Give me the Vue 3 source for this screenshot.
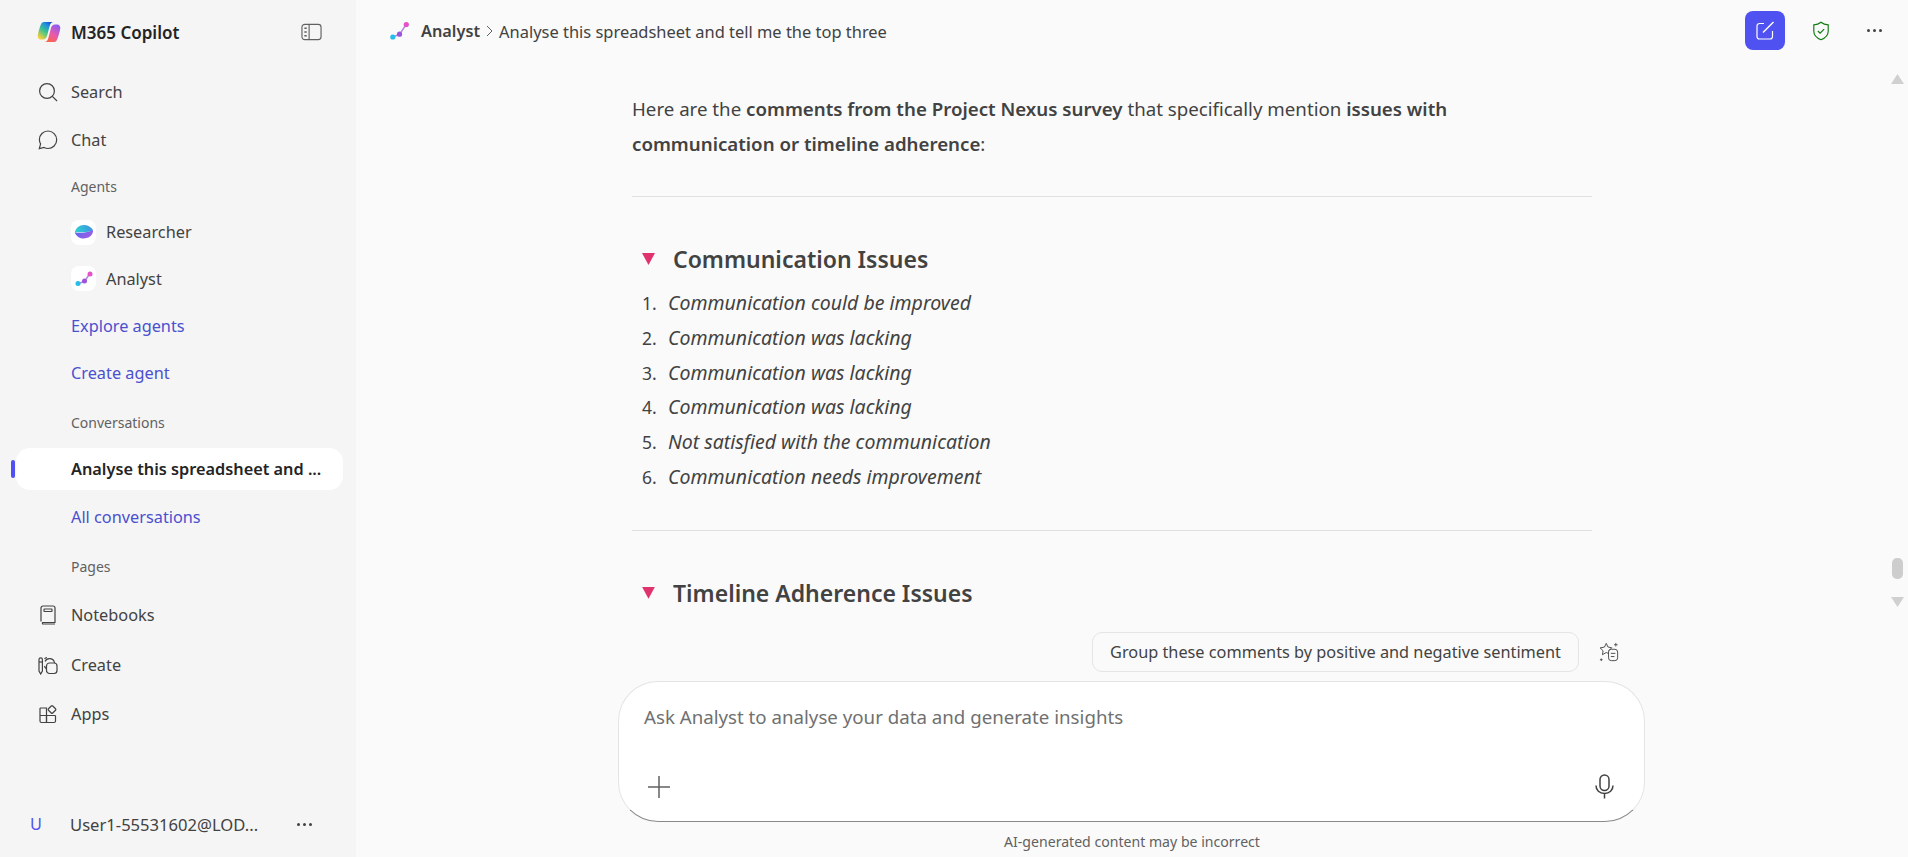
<script setup>
const communication = [
  'Communication could be improved',
  'Communication was lacking',
  'Communication was lacking',
  'Communication was lacking',
  'Not satisfied with the communication',
  'Communication needs improvement',
];
</script>

<template>
  <div class="app">
    <aside class="sidebar">
      <div class="brand">
        <svg class="brand-logo" viewBox="0 0 24 24">
          <defs>
            <linearGradient id="cpA" x1="0.1" y1="0.9" x2="0.7" y2="0">
              <stop offset="0" stop-color="#f8cf3c" />
              <stop offset="0.45" stop-color="#3fc48a" />
              <stop offset="0.8" stop-color="#1f8fe0" />
              <stop offset="1" stop-color="#1458d0" />
            </linearGradient>
            <linearGradient id="cpB" x1="0.2" y1="1" x2="0.8" y2="0">
              <stop offset="0" stop-color="#f9683a" />
              <stop offset="0.45" stop-color="#ec5aa8" />
              <stop offset="1" stop-color="#8a5cf4" />
            </linearGradient>
          </defs>
          <path fill="url(#cpA)" d="M7 2h9.500c-2 0-3 1.200-3.700 3.500L10 16c-.6 2-2 3.500-4 3.500H4C1.800 19.500.3 17.400.8 15 1.500 11 3 6.500 4 4.300 4.700 2.800 5.700 2 7 2z" />
          <path fill="url(#cpB)" d="M17 22H7.500c2 0 3-1.200 3.700-3.500L14 8c.6-2 2-3.500 4-3.500h2c2.200 0 3.700 2.100 3.200 4.500-.7 4-2.200 8.500-3.200 10.700C19.300 21.200 18.300 22 17 22z" />
        </svg>
        <span class="brand-name">M365 Copilot</span>
        <svg class="panel-icon" viewBox="0 0 22 18" fill="none" stroke="#616161" stroke-width="1.200">
          <rect x="1" y="1" width="20" height="16" rx="3" />
          <path d="M8.500 1v16" />
          <path d="M3.500 5h2.500M3.500 9h2.500M3.500 13h2.500" stroke-width="1.500" />
        </svg>
      </div>

      <div class="row row-main">
        <svg class="nav-icon" viewBox="0 0 20 20" fill="none" stroke="#424242" stroke-width="1.200">
          <circle cx="9" cy="9" r="7.400" />
          <path d="M14.400 14.400l4.600 4.600" />
        </svg>
        <span>Search</span>
      </div>
      <div class="row row-main">
        <svg class="nav-icon" viewBox="0 0 20 20" fill="none" stroke="#424242" stroke-width="1.200">
          <path d="M10 1C5.300 1 1.400 4.900 1.400 9.600c0 1.600.4 3 1.200 4.300L1.300 18.700l4.800-1.200c1.200.6 2.500 1 3.900 1 4.700 0 8.700-3.700 8.700-8.700C18.700 4.900 14.700 1 10 1z" />
        </svg>
        <span>Chat</span>
      </div>

      <div class="label label-agents">Agents</div>
      <div class="row row-sub agent-first">
        <span class="agent-tile">
          <svg viewBox="0 0 20 20">
            <defs>
              <linearGradient id="resA" x1="0" y1="0.4" x2="1" y2="0.2">
                <stop offset="0" stop-color="#2fd0d0" />
                <stop offset="1" stop-color="#3c8ee6" />
              </linearGradient>
              <linearGradient id="resB" x1="0" y1="0.2" x2="1" y2="0.8">
                <stop offset="0" stop-color="#5a68ea" />
                <stop offset="1" stop-color="#a85ce8" />
              </linearGradient>
            </defs>
            <path fill="url(#resA)" d="M.8 10.500C1.500 6 5.500 3 10 3c3.500 0 6.500 1.500 9 5-1.500 1-3 1.500-5 1.800-5 .8-9.800.5-13.200.7z" />
            <path fill="url(#resB)" d="M.8 10.500c3 .5 8 .5 12.500-.5 2.500-.5 4.500-1.200 5.700-2 .5 3-2 8-9 8.500C5.500 16.800 2 14 .8 10.500z" />
          </svg>
        </span>
        <span class="agent-name">Researcher</span>
      </div>
      <div class="row row-sub">
        <span class="agent-tile">
          <svg viewBox="0 0 20 20" fill="none">
            <path d="M4 14.500l6.500-2 5-7.500" stroke="#b58adf" stroke-width="1.500" />
            <circle cx="4" cy="14.500" r="2.500" fill="#27bdea" />
            <circle cx="10.500" cy="12" r="2.500" fill="#9b55dc" />
            <circle cx="16" cy="5" r="2.500" fill="#e651c8" />
          </svg>
        </span>
        <span class="agent-name">Analyst</span>
      </div>
      <div class="row row-sub link">Explore agents</div>
      <div class="row row-sub link">Create agent</div>

      <div class="label label-conv">Conversations</div>
      <div class="active-row">
        <span class="active-mark"></span>
        <span class="active-text">Analyse this spreadsheet and ...</span>
      </div>
      <div class="row row-sub link all-conv">All conversations</div>

      <div class="label label-pages">Pages</div>
      <div class="row row-main page-row first-page">
        <svg class="nav-icon" viewBox="0 0 20 20" fill="none" stroke="#424242" stroke-width="1.200">
          <path d="M3 16.500V3a2 2 0 0 1 2-2h10a2 2 0 0 1 2 2v14.500H4.600A1.600 1.600 0 0 0 4.600 19H17" />
          <rect x="6" y="4" width="8" height="2.500" rx=".5" />
        </svg>
        <span>Notebooks</span>
      </div>
      <div class="row row-main page-row">
        <svg class="nav-icon" viewBox="0 0 20 20" fill="none" stroke="#424242" stroke-width="1.200">
          <path d="M1 4.500a1.700 1.700 0 0 1 3.400 0V16l-1.700 3L1 16z" />
          <path d="M1 7h3.400" />
          <path d="M7 6.500A5 5 0 0 1 16.500 8" />
          <path d="M6.500 3.800A5 5 0 0 1 9 2.500" />
          <path d="M8 13.500a5 5 0 0 1-1.500-2.500" />
          <rect x="8.500" y="8" width="10.500" height="10.500" rx="3" />
        </svg>
        <span>Create</span>
      </div>
      <div class="row row-main page-row">
        <svg class="nav-icon" viewBox="0 0 20 20" fill="none" stroke="#424242" stroke-width="1.200">
          <path d="M2.500 4H8.500V18.500H3.500a1.500 1.500 0 0 1-1.500-1.500V4.500z" />
          <path d="M2 11.500h15.500M8.500 11.500v7h7.500a1.500 1.500 0 0 0 1.500-1.500v-5.500" />
          <rect x="11" y="2.500" width="6" height="6" rx="1" transform="rotate(45 14 5.500)" />
        </svg>
        <span>Apps</span>
      </div>

      <div class="user-row">
        <span class="user-initial">U</span>
        <span class="user-name">User1-55531602@LOD...</span>
        <span class="dots"><i></i><i></i><i></i></span>
      </div>
    </aside>

    <main class="main">
      <header class="topbar">
        <svg class="crumb-logo" viewBox="0 0 20 20" fill="none">
          <path d="M2.500 16l7-2.500 6-9" stroke="#b58adf" stroke-width="1.500" />
          <circle cx="2.800" cy="16" r="2.600" fill="#27bdea" />
          <circle cx="9.500" cy="13.200" r="2.600" fill="#9b55dc" />
          <circle cx="16.300" cy="3.500" r="2.600" fill="#e651c8" />
        </svg>
        <strong class="crumb-agent">Analyst</strong>
        <svg class="crumb-chevron" viewBox="0 0 7 12" fill="none" stroke="#616161" stroke-width="1">
          <path d="M1 1l5 5-5 5" />
        </svg>
        <span class="crumb-title">Analyse this spreadsheet and tell me the top three</span>
        <div class="top-actions">
          <button class="new-chat" type="button">
            <svg viewBox="0 0 20 20" fill="none" stroke="#fff" stroke-width="1.200">
              <path d="M9 2.500H4.500a2.500 2.500 0 0 0-2.500 2.500V15.500a2.500 2.500 0 0 0 2.500 2.500H15a2.500 2.500 0 0 0 2.500-2.500V10" />
              <path d="M8 11.500L18.500 1" stroke-width="1.500" />
            </svg>
          </button>
          <svg class="shield" viewBox="0 0 20 22" fill="none" stroke="#107c10" stroke-width="1.300">
            <path d="M10 1.200c2 1.700 4.700 2.800 8 3v7c0 4.500-3.200 7.500-8 9.500-4.800-2-8-5-8-9.500v-7c3.300-.2 6-1.300 8-3z" />
            <path d="M6.500 11l2.500 2.500 4.500-4.500" />
          </svg>
          <span class="dots top-dots"><i></i><i></i><i></i></span>
        </div>
      </header>

      <div class="scroll-area">
        <article class="answer">
          <p class="intro">
            Here are the <strong>comments from the Project Nexus survey</strong> that specifically mention
            <strong>issues with communication or timeline adherence</strong>:
          </p>
          <hr />
          <h3><span class="tri"></span>Communication Issues</h3>
          <ol>
            <li v-for="(item, i) in communication" :key="i">
              <span class="num">{{ i + 1 }}.</span><em>{{ item }}</em>
            </li>
          </ol>
          <hr class="second" />
          <h3><span class="tri"></span>Timeline Adherence Issues</h3>
        </article>

        <div class="scrollbar">
          <span class="arrow up"></span>
          <span class="thumb"></span>
          <span class="arrow down"></span>
        </div>
      </div>

      <div class="suggestions">
        <button class="chip" type="button">Group these comments by positive and negative sentiment</button>
        <svg class="spark" viewBox="0 0 22 22" fill="none" stroke="#424242" stroke-width="1">
          <path d="M8 1.500l1.800 4 4.200.8-3 3 .5 4-3.500-1.800L3.800 14l.7-4.300L1.200 6.500l4.800-.9z" />
          <rect x="10.500" y="8" width="10" height="12.500" rx="3" fill="#fafafa" />
          <path d="M13 12.500h5M13 16h4" />
          <path d="M18.500 1v4M16.500 3h4M2.500 18v3M1 19.500h3" stroke-width=".9" />
        </svg>
      </div>

      <div class="composer">
        <div class="placeholder">Ask Analyst to analyse your data and generate insights</div>
        <div class="composer-tools">
          <svg class="plus" viewBox="0 0 22 22" stroke="#616161" stroke-width="1.500">
            <path d="M11 0v22M0 11h22" />
          </svg>
          <svg class="mic" viewBox="0 0 19 25" fill="none" stroke="#424242" stroke-width="1.500">
            <rect x="5" y="1" width="9" height="15.500" rx="4.500" />
            <path d="M1 11.500c0 4.800 3.500 8 8.500 8s8.500-3.200 8.500-8M9.500 19.500v5" />
          </svg>
        </div>
      </div>
      <div class="disclaimer">AI-generated content may be incorrect</div>
    </main>
  </div>
</template>

<style>
html,
body {
  margin: 0;
  height: 100%;
  overflow: hidden;
}
</style>

<style scoped>
.app {
  display: flex;
  height: 857px;
  background: #fafafa;
  color: #424242;
  font-family: "Noto Sans", "Open Sans", "Liberation Sans", sans-serif;
  font-size: 16.3px;
}

.sidebar {
  width: 356px;
  flex-shrink: 0;
  display: flex;
  flex-direction: column;
  background: #f5f5f5;
}

.brand {
  display: flex;
  align-items: center;
  height: 64px;
  padding: 0 34px 0 37px;
  margin-bottom: 4px;
}

.brand-logo {
  width: 24px;
  height: 24px;
}

.brand-name {
  margin-left: 10px;
  font-size: 17px;
  font-weight: 600;
  color: #242424;
}

.panel-icon {
  width: 21px;
  height: 18px;
  margin-left: auto;
}

.row {
  display: flex;
  align-items: center;
  height: 48px;
  flex-shrink: 0;
}

.row-main {
  padding-left: 38px;
}

.page-row {
  height: 49px;
}

.first-page {
  height: 50px;
}

.nav-icon {
  width: 20px;
  height: 20px;
  margin-right: 13px;
}

.label {
  padding-left: 71px;
  font-size: 14px;
  color: #616161;
  flex-shrink: 0;
  display: flex;
  align-items: center;
}

.label-agents {
  height: 45px;
}

.row-sub {
  padding-left: 71px;
  height: 47px;
}

.agent-first {
  height: 46px;
}

.agent-tile {
  width: 25px;
  height: 25px;
  border-radius: 8px;
  background: #fff;
  display: flex;
  align-items: center;
  justify-content: center;
  margin-right: 10px;
}

.agent-tile svg {
  width: 20px;
  height: 20px;
}

.link {
  color: #4a50cf;
}

.label-conv {
  height: 52px;
}

.active-row {
  position: relative;
  display: flex;
  align-items: center;
  height: 42px;
  margin: 0 13px 0 16px;
  padding-left: 55px;
  background: #fff;
  border-radius: 14px;
  flex-shrink: 0;
}

.active-mark {
  position: absolute;
  left: -5px;
  top: 12px;
  width: 4px;
  height: 18px;
  border-radius: 2px;
  background: #4f52f0;
}

.active-text {
  font-weight: 600;
  color: #242424;
}

.all-conv {
  height: 53px;
}

.label-pages {
  height: 47px;
}

.user-row {
  display: flex;
  align-items: center;
  margin-top: auto;
  height: 44px;
  margin-bottom: 11px;
  padding-left: 30px;
}

.user-initial {
  width: 40px;
  color: #4f52f0;
}

.user-name {
  width: 227px;
  font-size: 16.6px;
}

.dots {
  display: flex;
  gap: 3px;
}

.dots i {
  width: 3px;
  height: 3px;
  border-radius: 50%;
  background: #424242;
}

.main {
  flex: 1;
  min-width: 0;
  display: flex;
  flex-direction: column;
}

.topbar {
  display: flex;
  align-items: center;
  height: 64px;
  box-sizing: border-box;
  flex-shrink: 0;
  padding: 0 26px 2px 34px;
}

.crumb-logo {
  width: 20px;
  height: 20px;
}

.crumb-agent {
  margin-left: 11px;
  font-weight: 600;
}

.crumb-chevron {
  width: 7px;
  height: 12px;
  margin: 0 6px;
}

.crumb-title {
  font-size: 16.45px;
}

.top-actions {
  display: flex;
  align-items: center;
  margin-left: auto;
  margin-bottom: 1px;
}

.new-chat {
  width: 40px;
  height: 39px;
  border: 0;
  padding: 0;
  border-radius: 8px;
  background: #4f52f0;
  display: flex;
  align-items: center;
  justify-content: center;
}

.new-chat svg {
  width: 20px;
  height: 20px;
}

.shield {
  width: 18px;
  height: 20px;
  margin-left: 27px;
}

.top-dots {
  margin-left: 37px;
}

.scroll-area {
  position: relative;
  height: 564px;
  flex-shrink: 0;
  overflow: hidden;
  padding-right: 40px;
}

.answer {
  width: 960px;
  margin: 0 auto;
  padding-top: 27px;
  font-size: 18.7px;
  line-height: 35px;
}

.intro {
  margin: 0;
  max-width: 930px;
}

.answer strong {
  font-weight: 600;
}

hr {
  border: 0;
  border-top: 1px solid #e0e0e0;
  margin: 35px 0 45px;
}

h3 {
  display: flex;
  align-items: center;
  margin: 0;
  padding-left: 10px;
  font-size: 23px;
  line-height: 34px;
  font-weight: 600;
}

.tri {
  width: 13px;
  height: 12px;
  margin-right: 18px;
  background: #e0336e;
  clip-path: polygon(0 0, 100% 0, 50% 100%);
}

ol {
  list-style: none;
  margin: 10px 0 0;
  padding: 0 0 0 10px;
}

li {
  display: flex;
  line-height: 34.8px;
}

.num {
  width: 26px;
  flex-shrink: 0;
  font-size: 17.5px;
}

li em {
  font-size: 19.5px;
}

hr.second {
  margin-top: 35px;
}

.scrollbar {
  position: absolute;
  right: 0;
  top: 0;
  bottom: 0;
  width: 22px;
}

.arrow {
  position: absolute;
  left: 5px;
  width: 13px;
  height: 10px;
  background: #d0d0d0;
}

.arrow.up {
  top: 10px;
  clip-path: polygon(50% 0, 100% 100%, 0 100%);
}

.arrow.down {
  top: 533px;
  clip-path: polygon(0 0, 100% 0, 50% 100%);
}

.thumb {
  position: absolute;
  left: 6px;
  top: 494px;
  width: 11px;
  height: 21px;
  border-radius: 5px;
  background: #cdcdcd;
}

.suggestions {
  display: flex;
  justify-content: flex-end;
  align-items: center;
  width: 1026px;
  margin: 4px 0 9px 262px;
  padding-right: 25px;
  box-sizing: border-box;
  flex-shrink: 0;
}

.chip {
  height: 40px;
  width: 487px;
  border: 1px solid #e5e5e5;
  border-radius: 10px;
  background: #fafafa;
  color: #424242;
  font: inherit;
  padding: 0;
}

.spark {
  width: 20px;
  height: 20px;
  margin-left: 20px;
}

.composer {
  width: 1027px;
  height: 141px;
  margin-left: 262px;
  box-sizing: border-box;
  border: 1px solid #e4e4e4;
  border-bottom-color: #8a8a8a;
  border-radius: 40px;
  background: #fff;
  padding: 19px 30px 0 25px;
  flex-shrink: 0;
}

.placeholder {
  height: 32px;
  line-height: 32px;
  font-size: 18.7px;
  color: #707070;
}

.composer-tools {
  display: flex;
  align-items: center;
  justify-content: space-between;
  margin-top: 41px;
  padding-left: 4px;
}

.plus {
  width: 22px;
  height: 22px;
}

.mic {
  width: 19px;
  height: 25px;
}

.disclaimer {
  text-align: center;
  font-size: 14.1px;
  line-height: 18px;
  margin-top: 11px;
  color: #616161;
}
</style>
